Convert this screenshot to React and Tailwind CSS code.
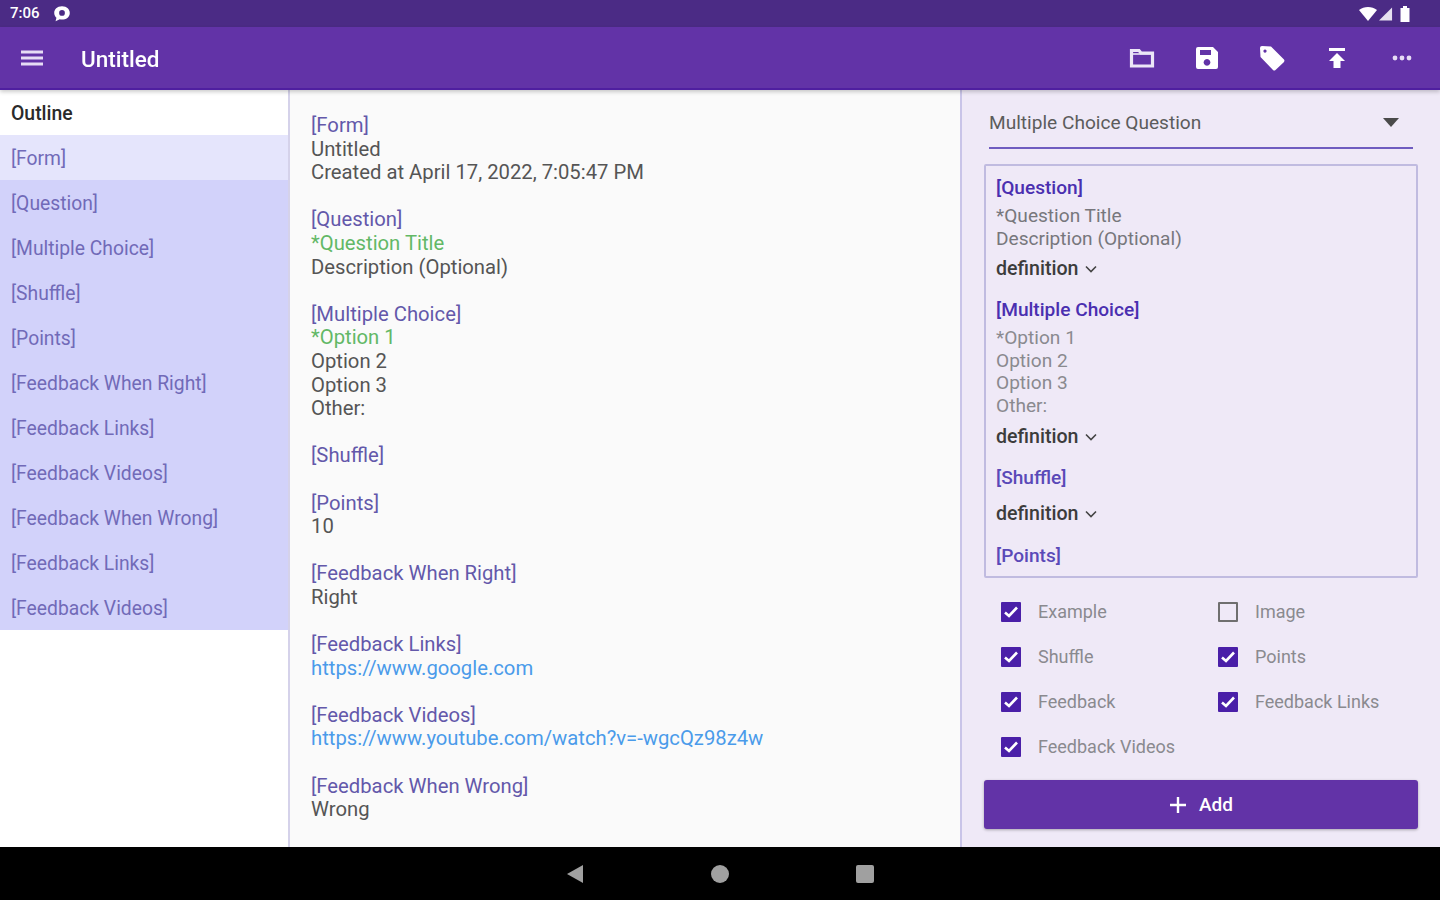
import React from "react";

const outline = ["[Question]","[Multiple Choice]","[Shuffle]","[Points]","[Feedback When Right]","[Feedback Links]","[Feedback Videos]","[Feedback When Wrong]","[Feedback Links]","[Feedback Videos]"];

const doc = [
  [["h","[Form]"],["t","Untitled"],["t","Created at April 17, 2022, 7:05:47 PM"]],
  [["h","[Question]"],["g","*Question Title"],["t","Description (Optional)"]],
  [["h","[Multiple Choice]"],["g","*Option 1"],["t","Option 2"],["t","Option 3"],["t","Other:"]],
  [["h","[Shuffle]"]],
  [["h","[Points]"],["t","10"]],
  [["h","[Feedback When Right]"],["t","Right"]],
  [["h","[Feedback Links]"],["l","https://www.google.com"]],
  [["h","[Feedback Videos]"],["l","https://www.youtube.com/watch?v=-wgcQz98z4w"]],
  [["h","[Feedback When Wrong]"],["t","Wrong"]],
];

const tone = { h: "text-[#6358aa]", t: "text-[#555555]", g: "text-[#62b866]", l: "text-[#4a9bea]" };

function Chevron() {
  return (
    <svg width="14" height="14" viewBox="0 0 14 14" fill="none" stroke="#444" strokeWidth="1.6" className="ml-[6px]">
      <path d="M2 4.5 L7 9.5 L12 4.5" />
    </svg>
  );
}

function Definition({ className }) {
  return (
    <div className={"flex items-center h-[24px] text-[19.6px] font-medium text-[#3c3c3c] " + className}>
      definition
      <Chevron />
    </div>
  );
}

function Check({ label, on = true }) {
  return (
    <div className="flex items-center h-[45px]">
      {on ? (
        <svg width="20" height="20" viewBox="0 0 20 20" className="ml-[17px] shrink-0">
          <rect width="20" height="20" rx="1" fill="#4a1fa8" />
          <path d="M4 10.5 L8 14 L16 5.5" fill="none" stroke="#fff" strokeWidth="2.6" />
        </svg>
      ) : (
        <div className="ml-[17px] w-[20px] h-[20px] rounded-[1px] border-2 border-[#6f6f6f] shrink-0" />
      )}
      <span className="ml-[17px] text-[18px] text-[#8a8a8f]">{label}</span>
    </div>
  );
}

export default function App() {
  return (
    <div
      className="w-[1440px] h-[900px] flex flex-col overflow-hidden blur-[0.6px]"
      style={{ fontFamily: "Roboto, 'Noto Sans', sans-serif" }}
    >
      <div className="h-[27px] bg-[#4b2b85] flex items-center pl-[10px] text-white shrink-0">
        <span className="text-[15px] font-medium">7:06</span>
        <svg width="20" height="20" viewBox="0 0 18 18" className="ml-[12px]" fill="#fff">
          <path d="M9 2 C4.5 2 2 4.8 2 8 C2 10 3 11.4 4 12.4 L3.2 15.5 L7 13.8 C11.5 14.6 16 12.5 16 8 C16 4.8 13.5 2 9 2 Z" />
          <circle cx="9" cy="8" r="2.6" fill="#4b2b85" />
        </svg>
        <div className="ml-auto flex items-center mr-[30px]">
          <svg width="18" height="14" viewBox="0 0 18 14" fill="#fff"><path d="M0 3 C5 -1 13 -1 18 3 L9 14 Z" /></svg>
          <svg width="14" height="14" viewBox="0 0 15 14" fill="#e6e0f0" className="ml-[2px]"><path d="M14 0 V14 H0 Z" /></svg>
          <svg width="10" height="16" viewBox="0 0 10 16" fill="#fff" className="ml-[7px]"><path d="M3 0 H7 V2 H9.5 V16 H0.5 V2 H3 Z" /></svg>
        </div>
      </div>

      <div className="h-[63px] bg-[#6233a7] border-b-[2px] border-[#4f1fa0] flex items-center text-white shrink-0 z-10 shadow-[0_2px_4px_rgba(0,0,0,0.2)]">
        <svg width="24" height="24" viewBox="0 0 24 24" fill="#e6dcf5" className="ml-[20px] mt-[1px]">
          <path d="M1 4.5 H23 V7.5 H1 Z M1 10.5 H23 V13.5 H1 Z M1 16.5 H23 V19.5 H1 Z" />
        </svg>
        <span className="ml-[37px] pt-[4px] text-[22.5px] font-medium">Untitled</span>
        <div className="ml-auto flex items-center mt-[1px]">
          <svg width="28" height="28" viewBox="0 0 28 28" fill="none" stroke="#ece6f7" strokeWidth="3.2">
            <path d="M3.5 6.5 H11 L13 9 H24.5 V22 H3.5 Z" />
            <path d="M3.5 10 H24.5" strokeWidth="1.6" />
          </svg>
          <svg width="28" height="28" viewBox="0 0 28 28" fill="#fff" className="ml-[37px]">
            <path fillRule="evenodd" d="M5 3 H20 L25 8 V23 A2 2 0 0 1 23 25 H5 A2 2 0 0 1 3 23 V5 A2 2 0 0 1 5 3 Z M7 6 V11 H18 V6 Z M14 15 A3.4 3.4 0 1 0 14.01 15 Z" />
          </svg>
          <svg width="30" height="30" viewBox="0 0 30 30" fill="#fff" className="ml-[36px]">
            <path fillRule="evenodd" d="M3 5 A2 2 0 0 1 5 3 L14 3.5 L27 16.5 A2 2 0 0 1 27 19 L18.5 27 A2 2 0 0 1 16 27 L3.5 14 Z M8 6.5 A1.6 1.6 0 1 0 8.01 6.5 Z" />
          </svg>
          <svg width="24" height="24" viewBox="0 0 24 24" fill="#fff" className="ml-[38px]">
            <path d="M4 2 H20 V5 H4 Z M12 7 L20 15 H15.5 V22 H8.5 V15 H4 Z" />
          </svg>
          <svg width="24" height="24" viewBox="0 0 24 24" fill="#e6dcf5" className="ml-[41px] mr-[26px]">
            <circle cx="5" cy="12" r="2.4" /><circle cx="12" cy="12" r="2.4" /><circle cx="19" cy="12" r="2.4" />
          </svg>
        </div>
      </div>

      <div className="flex flex-1 min-h-0">
        <div className="w-[290px] shrink-0 bg-white border-r-[2px] border-[#d5d2ea]">
          <div className="h-[45px] flex items-center pl-[11px] pt-[3px] text-[19.4px] font-medium text-[#2a2a2a]">Outline</div>
          <div className="h-[45px] flex items-center pl-[11px] pt-[3px] text-[19.3px] text-[#716ab8] bg-[#e5e5fc]">[Form]</div>
          {outline.map((t, i) => (
            <div key={i} className="h-[45px] flex items-center pl-[11px] pt-[3px] text-[19.3px] text-[#716ab8] bg-[#d2d2fa]">{t}</div>
          ))}
        </div>

        <div className="w-[670px] shrink-0 bg-[#fafafa] pt-[24px] pl-[21px] text-[20.25px] leading-[23.6px]">
          {doc.map((block, i) => (
            <div key={i} className="mb-[23.6px]">
              {block.map(([k, t], j) => (
                <div key={j} className={tone[k]}>{t}</div>
              ))}
            </div>
          ))}
        </div>

        <div className="flex-1 bg-[#efe9f7] border-l-[2px] border-[#c9c4e8] pl-[22px] pr-[22px] flex flex-col">
          <div className="ml-[5px] mr-[5px] h-[59px] pt-[9px] border-b-[2px] border-[#6f5cc0] flex items-center justify-between shrink-0 text-[19.1px] text-[#5c5c5c]">
            Multiple Choice Question
            <svg width="18" height="10" viewBox="0 0 18 10" className="mr-[13px]" fill="#4a4a4a"><path d="M1 0 H17 L9 9 Z" /></svg>
          </div>

          <div className="mt-[15px] h-[414px] shrink-0 border-2 border-[#c0bbe0] rounded-[2px] pt-[10px] pl-[10px] overflow-hidden">
            <div className="text-[19.1px] leading-[24px] font-medium text-[#4a2fb0]">[Question]</div>
            <div className="mt-[4px] text-[19.1px] leading-[23px] text-[#77777c]">*Question Title<br />Description (Optional)</div>
            <Definition className="mt-[7px]" />
            <div className="mt-[17px] text-[19.1px] leading-[24px] font-medium text-[#4a2fb0]">[Multiple Choice]</div>
            <div className="mt-[5px] text-[19.1px] leading-[22.7px] text-[#8a8a8f]">*Option 1<br />Option 2<br />Option 3<br />Other:</div>
            <Definition className="mt-[7px]" />
            <div className="mt-[17px] text-[19.1px] leading-[24px] font-medium text-[#5a49b8]">[Shuffle]</div>
            <Definition className="mt-[12px]" />
            <div className="mt-[18px] text-[19.1px] leading-[24px] font-medium text-[#5a49b8]">[Points]</div>
          </div>

          <div className="mt-[11px] grid grid-cols-[217px_1fr] shrink-0">
            <Check label="Example" />
            <Check label="Image" on={false} />
            <Check label="Shuffle" />
            <Check label="Points" />
            <Check label="Feedback" />
            <Check label="Feedback Links" />
            <Check label="Feedback Videos" />
          </div>

          <div className="mt-[11px] h-[49px] pt-[1px] shrink-0 bg-[#6233a7] rounded-[3px] flex items-center justify-center text-white text-[19px] font-medium shadow-[0_1px_3px_rgba(0,0,0,0.3)]">
            <svg width="18" height="18" viewBox="0 0 18 18" fill="#fff" className="mr-[12px]"><path d="M7.8 1 H10.2 V7.8 H17 V10.2 H10.2 V17 H7.8 V10.2 H1 V7.8 H7.8 Z" /></svg>
            Add
          </div>
        </div>
      </div>

      <div className="h-[53px] bg-black shrink-0 flex items-center justify-center">
        <svg width="18" height="20" viewBox="0 0 18 20" fill="#a0a0a0" className="mr-[127px]"><path d="M1 10 L17 1 V19 Z" /></svg>
        <div className="w-[18px] h-[18px] rounded-full bg-[#a0a0a0]" />
        <div className="ml-[127px] w-[18px] h-[18px] rounded-[2px] bg-[#a0a0a0]" />
      </div>
    </div>
  );
}
